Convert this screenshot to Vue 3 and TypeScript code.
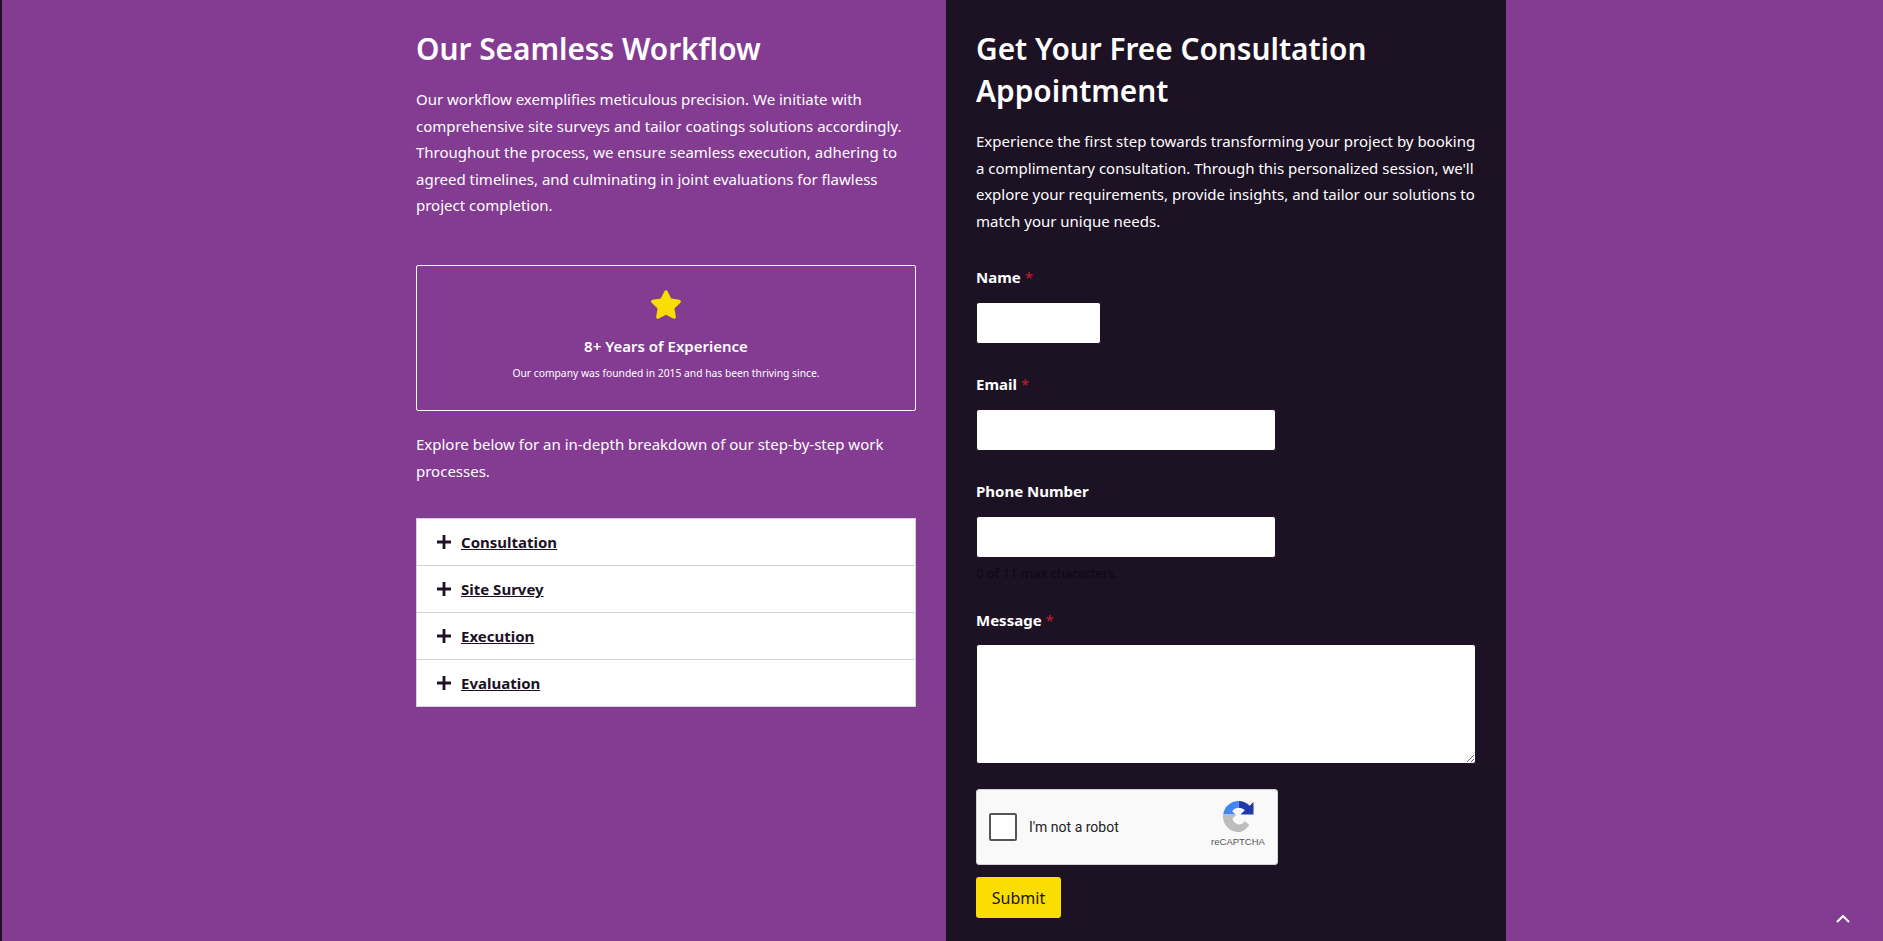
<script setup lang="ts">
const steps: string[] = ['Consultation', 'Site Survey', 'Execution', 'Evaluation']
</script>

<template>
  <div class="page">
    <div class="container">
      <section class="left">
        <h2 class="title">Our Seamless Workflow</h2>
        <p class="copy">Our workflow exemplifies meticulous precision. We initiate with comprehensive site surveys and tailor coatings solutions accordingly. Throughout the process, we ensure seamless execution, adhering to agreed timelines, and culminating in joint evaluations for flawless project completion.</p>
        <div class="exp">
          <svg class="star" viewBox="0 0 576 512"><path fill="#fade00" d="M259.3 17.8L194 150.2 47.9 171.5c-26.2 3.8-36.7 36.1-17.7 54.6l105.7 103-25 145.5c-4.5 26.3 23.2 46 46.4 33.7L288 439.6l130.7 68.7c23.2 12.2 50.9-7.4 46.4-33.7l-25-145.5 105.7-103c19-18.5 8.5-50.8-17.7-54.6L382 150.2 316.7 17.8c-11.7-23.6-45.6-23.9-57.4 0z"/></svg>
          <div class="exp-title">8+ Years of Experience</div>
          <div class="exp-sub">Our company was founded in 2015 and has been thriving since.</div>
        </div>
        <p class="copy explore">Explore below for an in-depth breakdown of our step-by-step work processes.</p>
        <div class="accordion">
          <div v-for="s in steps" :key="s" class="acc-row">
            <svg class="plus" viewBox="0 0 14 14"><path d="M5.6 0h2.8v5.6H14v2.8H8.4V14H5.6V8.4H0V5.6h5.6z" fill="#1c1224"/></svg>
            <a class="acc-link">{{ s }}</a>
          </div>
        </div>
      </section>
      <section class="right">
        <h2 class="title">Get Your Free Consultation Appointment</h2>
        <p class="copy">Experience the first step towards transforming your project by booking a complimentary consultation. Through this personalized session, we'll explore your requirements, provide insights, and tailor our solutions to match your unique needs.</p>
        <form class="form" @submit.prevent>
          <label class="label">Name <span class="req">*</span></label>
          <input class="input small" type="text" />
          <label class="label">Email <span class="req">*</span></label>
          <input class="input medium" type="email" />
          <label class="label">Phone Number</label>
          <input class="input medium tight" type="tel" />
          <div class="count">0 of 11 max characters.</div>
          <label class="label message">Message <span class="req">*</span></label>
          <textarea class="area"></textarea>
          <div class="captcha">
            <span class="check"></span>
            <span class="robot">I'm not a robot</span>
            <div class="brand">
              <svg class="rc" viewBox="0 0 32 32">
                <path fill="#1c3aa9" d="M16 0C20.600 0 24.600 2 27.500 5L31.500 1V14H18L22.500 9.500C21 8 19 7 16 7Z"/>
                <path fill="#4285f4" d="M16 0V7C13 7 11 8.500 9.500 10.500L13 14H.2C1 6 8 0 16 0Z"/>
                <path fill="#bdbdbd" d="M0 14H14L9.600 18.400C10.600 21.500 13 24 16 24.200C19 24.400 21 23 22.500 21L27 24.500C24.500 29 20.500 32 16 32C7 32 0 25 0 16Z"/>
              </svg>
              <span class="rc-text">reCAPTCHA</span>
            </div>
          </div>
          <button class="submit" type="submit">Submit</button>
        </form>
      </section>
    </div>
    <svg class="top" viewBox="0 0 14 8"><path d="M1 7l6-6 6 6" fill="none" stroke="#fff" stroke-width="2"/></svg>
  </div>
</template>

<style>
html, body { margin: 0; background: #843b92; }
</style>

<style scoped>
.page {
  position: relative;
  height: 941px;
  overflow: hidden;
  background: #843b92;
  border-left: 2px solid #1c1224;
  box-sizing: border-box;
  font-family: "Noto Sans", "Open Sans", sans-serif;
  font-size: 15px;
  color: #fff;
}
.container {
  display: grid;
  grid-template-columns: 560px 560px;
  margin-left: 384px;
  width: 1120px;
}
.left { padding: 28px 30px 0; box-sizing: border-box; }
.right { padding: 28px 30px 22px; background: #1c1224; box-sizing: border-box; height: 941px; }
.title {
  margin: 0;
  font-size: 29.8px;
  font-weight: 600;
  line-height: 42px;
}
.copy {
  margin: 16px 0 0;
  line-height: 26.6px;
}
.exp {
  margin-top: 46px;
  height: 146px;
  box-sizing: border-box;
  border: 1px solid #fff;
  border-radius: 2px;
  padding-top: 24px;
  text-align: center;
}
.star { display: block; width: 32px; height: 29px; margin: 0 auto; }
.exp-title { margin-top: 16px; font-size: 15px; font-weight: 600; line-height: 22px; }
.exp-sub { margin-top: 7px; font-size: 10.3px; line-height: 18px; }
.explore { margin-top: 20px; }
.accordion {
  margin-top: 34px;
  background: #fff;
  border: 1px solid #d0d3d9;
  color: #1c1224;
}
.acc-row {
  display: flex;
  align-items: center;
  gap: 10px;
  height: 46px;
  padding-left: 20px;
  border-top: 1px solid #d0d3d9;
}
.acc-row:first-child { border-top: 0; }
.plus { width: 14px; height: 14px; flex: none; }
.acc-link { font-size: 15px; font-weight: 700; text-decoration: underline; }
.form { display: flex; flex-direction: column; align-items: flex-start; margin-top: 29.5px; }
.label { display: block; font-weight: 700; line-height: 26px; margin-bottom: 12px; }
.message { margin-bottom: 11px; }
.req { color: #c0202e; font-weight: 400; }
.input {
  display: block;
  height: 42px;
  margin-bottom: 27px;
  box-sizing: border-box;
  background: #fff;
  border: 1px solid #1c1224;
  border-radius: 3px;
}
.small { width: 125px; }
.medium { width: 300px; }
.tight { margin-bottom: 0; }
.count { color: #0e0814; font-size: 13px; line-height: 26px; padding-top: 2px; margin-bottom: 21.5px; }
.area {
  display: block;
  width: 500px;
  height: 120px;
  box-sizing: border-box;
  background: #fff;
  border: 1px solid #1c1224;
  border-radius: 3px;
  margin-bottom: 25px;
}
.captcha {
  display: flex;
  align-items: center;
  position: relative;
  width: 302px;
  height: 76px;
  box-sizing: border-box;
  background: #f9f9f9;
  border: 1px solid #d3d3d3;
  border-radius: 3px;
  padding-left: 12px;
  color: #000;
  margin-bottom: 12px;
}
.check {
  width: 28px;
  height: 28px;
  box-sizing: border-box;
  background: #fff;
  border: 2px solid #555;
  border-radius: 2px;
}
.robot { margin-left: 12px; font-family: Roboto, sans-serif; font-size: 14px; color: #222; }
.brand {
  position: absolute;
  right: 11px;
  top: 11px;
  display: flex;
  flex-direction: column;
  align-items: center;
  width: 56px;
}
.rc { width: 31px; height: 31px; }
.rc-text { margin-top: 3px; font-family: "Liberation Sans", sans-serif; font-size: 9.5px; color: #555; line-height: 14px; }
.submit {
  width: 85px;
  height: 41px;
  background: #fade00;
  color: #1c1224;
  border: 0;
  border-radius: 3px;
  padding: 0;
  font-family: inherit;
  font-size: 16px;
}
.top { position: absolute; right: 33px; top: 915px; width: 14px; height: 8px; }
</style>
